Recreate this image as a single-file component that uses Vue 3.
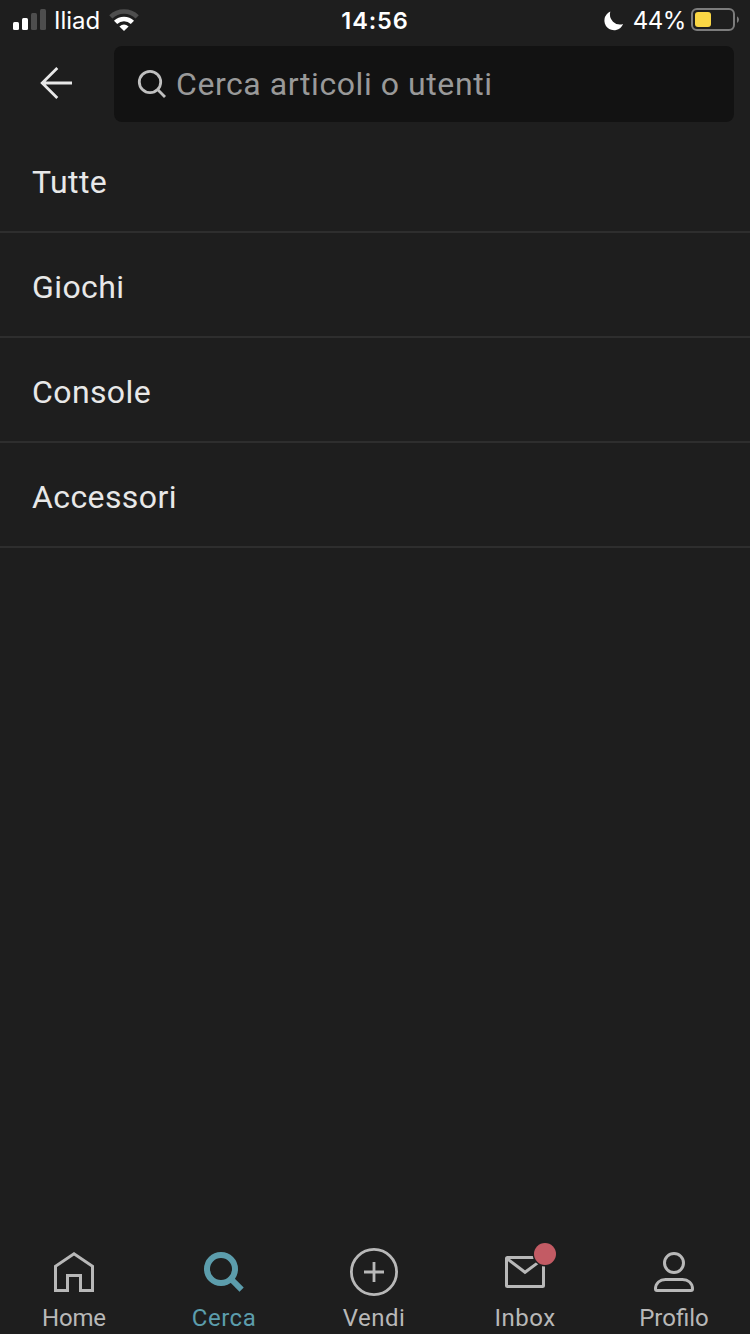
<script setup>
const categories = ['Tutte', 'Giochi', 'Console', 'Accessori']
</script>

<template>
  <div class="screen">
    <header class="status">
      <div class="status-left">
        <svg width="34" height="22" viewBox="0 0 34 22">
          <rect x="0" y="13" width="6" height="8" rx="1.5" fill="#fff" />
          <rect x="9" y="9" width="6" height="12" rx="1.5" fill="#fff" />
          <rect x="18" y="4" width="6" height="17" rx="1.5" fill="#4e4e4e" />
          <rect x="27" y="0" width="6" height="21" rx="1.5" fill="#4e4e4e" />
        </svg>
        <span class="carrier">Iliad</span>
        <svg class="wifi" width="30" height="23" viewBox="0 0 30 23">
          <path d="M1.8 7.8A19 19 0 0 1 28.2 7.8" fill="none" stroke="#4e4e4e" stroke-width="4.6" />
          <path d="M6.6 13.4A12 12 0 0 1 23.4 13.4" fill="none" stroke="#fff" stroke-width="4.6" />
          <path d="M10.4 17.4Q15 13.6 19.6 17.4L15 22Z" fill="#fff" />
        </svg>
      </div>
      <span class="clock">14:56</span>
      <div class="status-right">
        <svg class="moon" width="20" height="20" viewBox="0 0 20 20">
          <path d="M6.3 .6A9.7 9.7 0 1 0 19.1 13.1A10.2 10.2 0 0 1 6.3 .6Z" fill="#fff" />
        </svg>
        <span class="percent">44%</span>
        <svg class="battery" width="48" height="24" viewBox="0 0 48 24">
          <rect x="1" y="1" width="42" height="21" rx="5" fill="none" stroke="#7c7c7c" stroke-width="2" />
          <rect x="4" y="4" width="16" height="15" rx="3" fill="#fad745" />
          <path d="M46 8.3Q48 9.5 48 11.6T46 15Z" fill="#7c7c7c" />
        </svg>
      </div>
    </header>

    <div class="searchbar">
      <svg class="back" width="34" height="34" viewBox="0 0 34 34" fill="none" stroke="#e8e8e8" stroke-width="2.8">
        <path d="M17.3 1.9L2.2 17L17.3 32.1M2.2 17H32" />
      </svg>
      <div class="field">
        <svg width="30" height="30" viewBox="0 0 30 30" fill="none" stroke="#c0c0c0" stroke-width="2.8">
          <circle cx="13" cy="13" r="10.7" />
          <path d="M20.6 20.6L28 28" />
        </svg>
        <span class="placeholder">Cerca articoli o utenti</span>
      </div>
    </div>

    <main class="list">
      <div v-for="name in categories" :key="name" class="row"><span>{{ name }}</span></div>
    </main>

    <nav class="tabs">
      <div class="tab home">
        <svg width="50" height="50" viewBox="0 0 50 50" fill="none" stroke="#b8b8b8" stroke-width="3">
          <path d="M6.5 43.5V19.3L25 6.8L43.5 19.3V43.5H31.5V28.5H18.5V43.5Z" />
        </svg>
        <span>Home</span>
      </div>
      <div class="tab search active">
        <svg width="50" height="50" viewBox="0 0 50 50" fill="none" stroke="#5c9dac" stroke-width="6">
          <circle cx="22" cy="22" r="14" />
          <path d="M32 32L42.6 42.6" />
        </svg>
        <span>Cerca</span>
      </div>
      <div class="tab sell">
        <svg width="50" height="50" viewBox="0 0 50 50" fill="none" stroke="#b8b8b8" stroke-width="2.8">
          <circle cx="25" cy="25" r="22.6" />
          <path d="M25 15V35M15 25H35" />
        </svg>
        <span>Vendi</span>
      </div>
      <div class="tab inbox">
        <svg width="50" height="50" viewBox="0 0 50 50" fill="none" stroke="#b8b8b8" stroke-width="3">
          <path d="M38 10.5H8.5Q7.5 10.5 7.5 11.5V38.5Q7.5 39.5 8.5 39.5H43.5Q44.5 39.5 44.5 38.5V16" />
          <path d="M8 11.5L26 25.3L39 15.6" />
          <circle cx="46" cy="7" r="12.4" fill="#1e1e1e" stroke="none" />
          <circle cx="46" cy="7" r="11" fill="#c35b64" stroke="none" />
        </svg>
        <span>Inbox</span>
      </div>
      <div class="tab profile">
        <svg width="50" height="50" viewBox="0 0 50 50" fill="none" stroke="#b8b8b8" stroke-width="3">
          <circle cx="25" cy="16" r="9.5" />
          <path d="M16.5 32.5H33.5C39 32.5 43.5 36 43.5 42Q43.5 43.5 42 43.5H8Q6.5 43.5 6.5 42C6.5 36 11 32.5 16.5 32.5Z" />
        </svg>
        <span>Profilo</span>
      </div>
    </nav>
  </div>
</template>

<style>
body { margin: 0; background: #1e1e1e; }
</style>

<style scoped>
.screen {
  width: 750px;
  height: 1334px;
  display: flex;
  flex-direction: column;
  background: #1e1e1e;
  color: #e8e8e8;
  font-family: Roboto, "Liberation Sans", sans-serif;
  overflow: hidden;
}
svg { display: block; flex: none; overflow: visible; }
.status {
  height: 40px;
  display: grid;
  grid-template-columns: 1fr auto 1fr;
  align-items: center;
  font-family: Inter, sans-serif;
  font-size: 24px;
  color: #fff;
  white-space: nowrap;
}
.status-left { display: flex; align-items: center; padding-left: 13px; }
.carrier { margin-left: 7px; padding-top: 2px; line-height: 38px; }
.wifi { margin-left: 9px; }
.clock { font-size: 23.5px; font-weight: 600; letter-spacing: .9px; }
.status-right { display: flex; align-items: center; justify-content: flex-end; padding-right: 11px; }
.moon { margin-top: 2px; }
.percent { margin-left: 9px; padding-top: 1px; letter-spacing: -.4px; }
.battery { margin-left: 5px; }
.searchbar { height: 88px; display: flex; align-items: center; padding: 0 16px 0 40px; box-sizing: border-box; }
.back { margin-top: -3px; }
.field {
  height: 76px;
  flex: 1;
  margin: -1px 0 0 40px;
  padding-left: 23px;
  box-sizing: border-box;
  border-radius: 8px;
  background: #121212;
  display: flex;
  align-items: center;
}
.placeholder { margin-left: 9px; font-size: 32px; letter-spacing: .57px; color: #999; white-space: nowrap; }
.list { flex: 1; }
.row {
  height: 105px;
  box-sizing: border-box;
  padding-left: 32px;
  border-bottom: 2px solid #2e2e2e;
  font-size: 32px;
  letter-spacing: .4px;
  line-height: 108px;
}
.tabs { display: grid; grid-template-columns: repeat(5, 150px); height: 87px; }
.tab {
  display: flex;
  flex-direction: column;
  align-items: center;
  color: #b8b8b8;
  font-size: 24px;
  line-height: 28px;
  letter-spacing: .5px;
  white-space: nowrap;
}
.tab svg { margin-left: -2px; }
.tab span { margin: 7px 2px 0 0; }
.tab.inbox span { margin-right: 0; }
.home { letter-spacing: -.2px; }
.profile { letter-spacing: 0; }
.active { color: #5c9dac; }
</style>
